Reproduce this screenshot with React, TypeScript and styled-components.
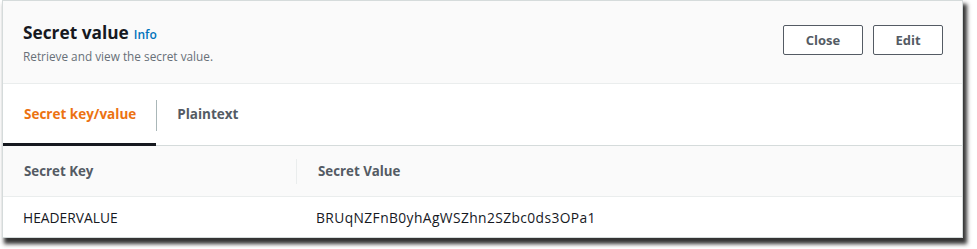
import styled, { createGlobalStyle } from "styled-components";

const GlobalStyle = createGlobalStyle`
  html, body {
    margin: 0;
    padding: 0;
    background: #ffffff;
  }
  body {
    font-family: "Open Sans", "Noto Sans", Arial, sans-serif;
    color: #16191f;
  }
`;

const Page = styled.div`
  padding: 0 0 12px 2px;
`;

const Panel = styled.div`
  width: 959px;
  border: 1px solid #d5dbdb;
  background: #ffffff;
  box-shadow: 3px 5px 4px 1px rgba(30, 30, 30, 0.9);
`;

const Header = styled.header`
  display: flex;
  align-items: flex-start;
  justify-content: space-between;
  height: 83px;
  padding: 0 19px 0 20px;
  background: #fafafa;
  border-bottom: 1px solid #eaeded;
  box-sizing: border-box;
`;

const TitleBlock = styled.div`
  padding-top: 20px;
`;

const Title = styled.h2`
  margin: 0;
  font-size: 17.3px;
  line-height: 24px;
  font-weight: 700;
  color: #16191f;
  display: flex;
  align-items: baseline;
  gap: 5px;
`;

const InfoLink = styled.a`
  font-size: 12px;
  font-weight: 600;
  color: #0073bb;
  text-decoration: none;
`;

const Subtitle = styled.p`
  margin: 1px 0 0;
  font-size: 11.8px;
  line-height: 16px;
  color: #687078;
`;

const Actions = styled.div`
  display: flex;
  gap: 10px;
  padding-top: 24px;
`;

const Button = styled.button<{ $width: number }>`
  width: ${(p) => p.$width}px;
  height: 30px;
  border: 1px solid #545b64;
  border-radius: 2px;
  background: #ffffff;
  color: #545b64;
  font-family: inherit;
  font-size: 13px;
  font-weight: 700;
  cursor: pointer;
`;

const TabBar = styled.div`
  display: flex;
  align-items: stretch;
  height: 61px;
  border-bottom: 1px solid #d5dbdb;
`;

const Tab = styled.div<{ $active?: boolean }>`
  display: flex;
  align-items: center;
  padding: 0 20px 0 ${(p) => (p.$active ? 21 : 20)}px;
  font-size: 13.5px;
  font-weight: 700;
  color: ${(p) => (p.$active ? "#ec7211" : "#545b64")};
  border-bottom: 3px solid ${(p) => (p.$active ? "#16191f" : "transparent")};
  margin-bottom: -1px;
`;

const TabDivider = styled.div`
  width: 1px;
  background: #aab7b8;
  margin: 16px 0 14px;
`;

const Table = styled.div`
  display: grid;
  grid-template-columns: 293px 1fr;
`;

const HeadCell = styled.div<{ $divider?: boolean }>`
  display: flex;
  align-items: center;
  height: 50px;
  background: #fafafa;
  border-bottom: 1px solid #eaeded;
  font-size: 13.3px;
  font-weight: 700;
  color: #545b64;
  padding-left: ${(p) => (p.$divider ? 0 : 21)}px;
`;

const ColDivider = styled.span`
  width: 1px;
  height: 25px;
  background: #eaeded;
  margin-right: 21px;
`;

const Cell = styled.div<{ $spacing: number }>`
  display: flex;
  align-items: center;
  height: 40px;
  padding-left: 20px;
  font-size: 13.8px;
  letter-spacing: ${(p) => p.$spacing}px;
  color: #16191f;
`;

export default function App() {
  return (
    <Page>
      <GlobalStyle />
      <Panel>
        <Header>
          <TitleBlock>
            <Title>
              Secret value <InfoLink href="#">Info</InfoLink>
            </Title>
            <Subtitle>Retrieve and view the secret value.</Subtitle>
          </TitleBlock>
          <Actions>
            <Button $width={80}>Close</Button>
            <Button $width={70}>Edit</Button>
          </Actions>
        </Header>
        <TabBar>
          <Tab $active>Secret key/value</Tab>
          <TabDivider />
          <Tab>Plaintext</Tab>
        </TabBar>
        <Table>
          <HeadCell>Secret Key</HeadCell>
          <HeadCell $divider>
            <ColDivider />
            Secret Value
          </HeadCell>
          <Cell $spacing={0}>HEADERVALUE</Cell>
          <Cell $spacing={0.4}>BRUqNZFnB0yhAgWSZhn2SZbc0ds3OPa1</Cell>
        </Table>
      </Panel>
    </Page>
  );
}
